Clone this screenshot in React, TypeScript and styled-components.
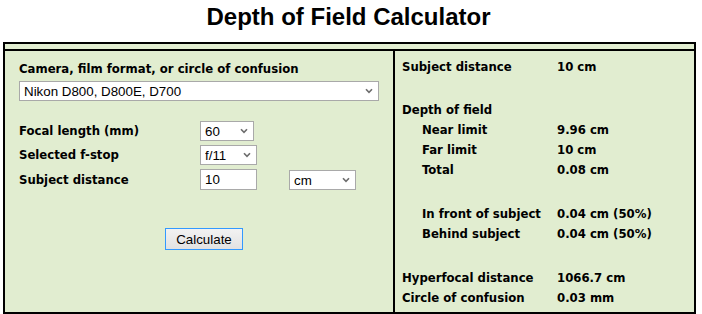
import React from 'react'
import styled, { createGlobalStyle } from 'styled-components'

const colors = {
  panel: '#e1edd0',
  border: '#000',
  field: '#a9a9a9',
  text: '#000',
}

const GlobalStyle = createGlobalStyle`
  html, body {
    margin: 0;
    padding: 0;
    background: #fff;
  }
  body {
    font-family: "Liberation Sans", Arial, sans-serif;
    color: ${colors.text};
  }
`

const Page = styled.div`
  width: 702px;
`

const Title = styled.h1`
  margin: 0 0 11px;
  padding: 3px 5px 0 0;
  font-size: 24px;
  line-height: 28px;
  font-weight: bold;
  text-align: center;
`

const Frame = styled.div`
  margin-left: 3px;
  width: 693px;
  box-sizing: border-box;
  border: 2px solid ${colors.border};
  background: ${colors.panel};
`

const TopStrip = styled.div`
  height: 5px;
  border-bottom: 2px solid ${colors.border};
`

const Body = styled.div`
  display: flex;
  height: 261px;
`

const InputPanel = styled.div`
  width: 390px;
  flex: none;
  box-sizing: border-box;
  border-right: 2px solid ${colors.border};
  padding: 10px 0 0 14px;
`

const ResultPanel = styled.div`
  flex: 1;
  padding: 6px 0 0 7px;
`

const Label = styled.span<{ $indent?: boolean }>`
  display: block;
  font-family: "DejaVu Sans Condensed", "DejaVu Sans", sans-serif;
  font-stretch: condensed;
  font-weight: bold;
  font-size: 13px;
  line-height: 16px;
  padding-left: ${p => (p.$indent ? '20px' : '0')};
  white-space: nowrap;
`

const SelectWrap = styled.div<{ $width: number }>`
  position: relative;
  width: ${p => p.$width}px;
  height: 20px;
  margin-top: ${p => (p.$width > 100 ? '4px' : '0')};
`

const NativeSelect = styled.select`
  appearance: none;
  width: 100%;
  height: 100%;
  box-sizing: border-box;
  margin: 0;
  padding: 0 0 0 4px;
  border: 1px solid ${colors.field};
  border-radius: 0;
  background: #fff;
  font-family: "Liberation Sans", Arial, sans-serif;
  font-size: 13.33px;
  color: #000;
  outline: none;
`

const Chevron = styled.svg`
  position: absolute;
  right: 6px;
  top: 7px;
  pointer-events: none;
`

const TextField = styled.input`
  width: 57px;
  height: 21px;
  box-sizing: border-box;
  margin: 0;
  padding: 0 0 0 4px;
  border: 1px solid ${colors.field};
  background: #fff;
  font-family: "Liberation Sans", Arial, sans-serif;
  font-size: 13.33px;
  color: #000;
  outline: none;
`

const FormGrid = styled.div`
  display: grid;
  grid-template-columns: 181px auto;
  row-gap: 4px;
  margin-top: 20px;
  align-items: center;
`

const Controls = styled.div`
  display: flex;
  align-items: flex-end;
  gap: 32px;
`

const ButtonRow = styled.div`
  margin-top: 38px;
  padding-left: 146px;
`

const CalcButton = styled.button`
  width: 78px;
  height: 22px;
  margin: 0;
  padding: 0;
  border: 1px solid #3399ff;
  border-radius: 0;
  background: linear-gradient(#f2f2f2, #e2e2e2);
  font-family: "Liberation Sans", Arial, sans-serif;
  font-size: 13.33px;
  color: #000;
`

const ResultGrid = styled.div`
  display: grid;
  grid-template-columns: 155px auto;
`

const Cell = styled(Label)`
  line-height: 20px;
`

const Spacer = styled.div<{ $h: number }>`
  grid-column: 1 / 3;
  height: ${p => p.$h}px;
`

function Select({ width, value, options }: { width: number; value: string; options: string[] }) {
  return (
    <SelectWrap $width={width}>
      <NativeSelect defaultValue={value}>
        {options.map(o => (
          <option key={o}>{o}</option>
        ))}
      </NativeSelect>
      <Chevron width="8" height="6" viewBox="0 0 8 6">
        <path d="M1 1.2 L4 4.4 L7 1.2" fill="none" stroke="#6d6d6d" strokeWidth="1.6" />
      </Chevron>
    </SelectWrap>
  )
}

function Result({ label, value, indent }: { label: string; value?: string; indent?: boolean }) {
  return (
    <>
      <Cell $indent={indent}>{label}</Cell>
      <Cell>{value ?? ''}</Cell>
    </>
  )
}

export default function App() {
  return (
    <Page>
      <GlobalStyle />
      <Title>Depth of Field Calculator</Title>
      <Frame>
        <TopStrip />
        <Body>
          <InputPanel>
            <Label>Camera, film format, or circle of confusion</Label>
            <Select
              width={360}
              value="Nikon D800, D800E, D700"
              options={['Nikon D800, D800E, D700', 'Nikon D3, D4', 'Canon 5D Mark III']}
            />
            <FormGrid>
              <Label>Focal length (mm)</Label>
              <Controls>
                <Select width={54} value="60" options={['50', '60', '85']} />
              </Controls>
              <Label>Selected f-stop</Label>
              <Controls>
                <Select width={57} value="f/11" options={['f/8', 'f/11', 'f/16']} />
              </Controls>
              <Label>Subject distance</Label>
              <Controls>
                <TextField defaultValue="10" />
                <Select width={67} value="cm" options={['cm', 'm', 'ft']} />
              </Controls>
            </FormGrid>
            <ButtonRow>
              <CalcButton>Calculate</CalcButton>
            </ButtonRow>
          </InputPanel>
          <ResultPanel>
            <ResultGrid>
              <Result label="Subject distance" value="10 cm" />
              <Spacer $h={23} />
              <Result label="Depth of field" />
              <Result label="Near limit" value="9.96 cm" indent />
              <Result label="Far limit" value="10 cm" indent />
              <Result label="Total" value="0.08 cm" indent />
              <Spacer $h={24} />
              <Result label="In front of subject" value="0.04 cm (50%)" indent />
              <Result label="Behind subject" value="0.04 cm (50%)" indent />
              <Spacer $h={24} />
              <Result label="Hyperfocal distance" value="1066.7 cm" />
              <Result label="Circle of confusion" value="0.03 mm" />
            </ResultGrid>
          </ResultPanel>
        </Body>
      </Frame>
    </Page>
  )
}
